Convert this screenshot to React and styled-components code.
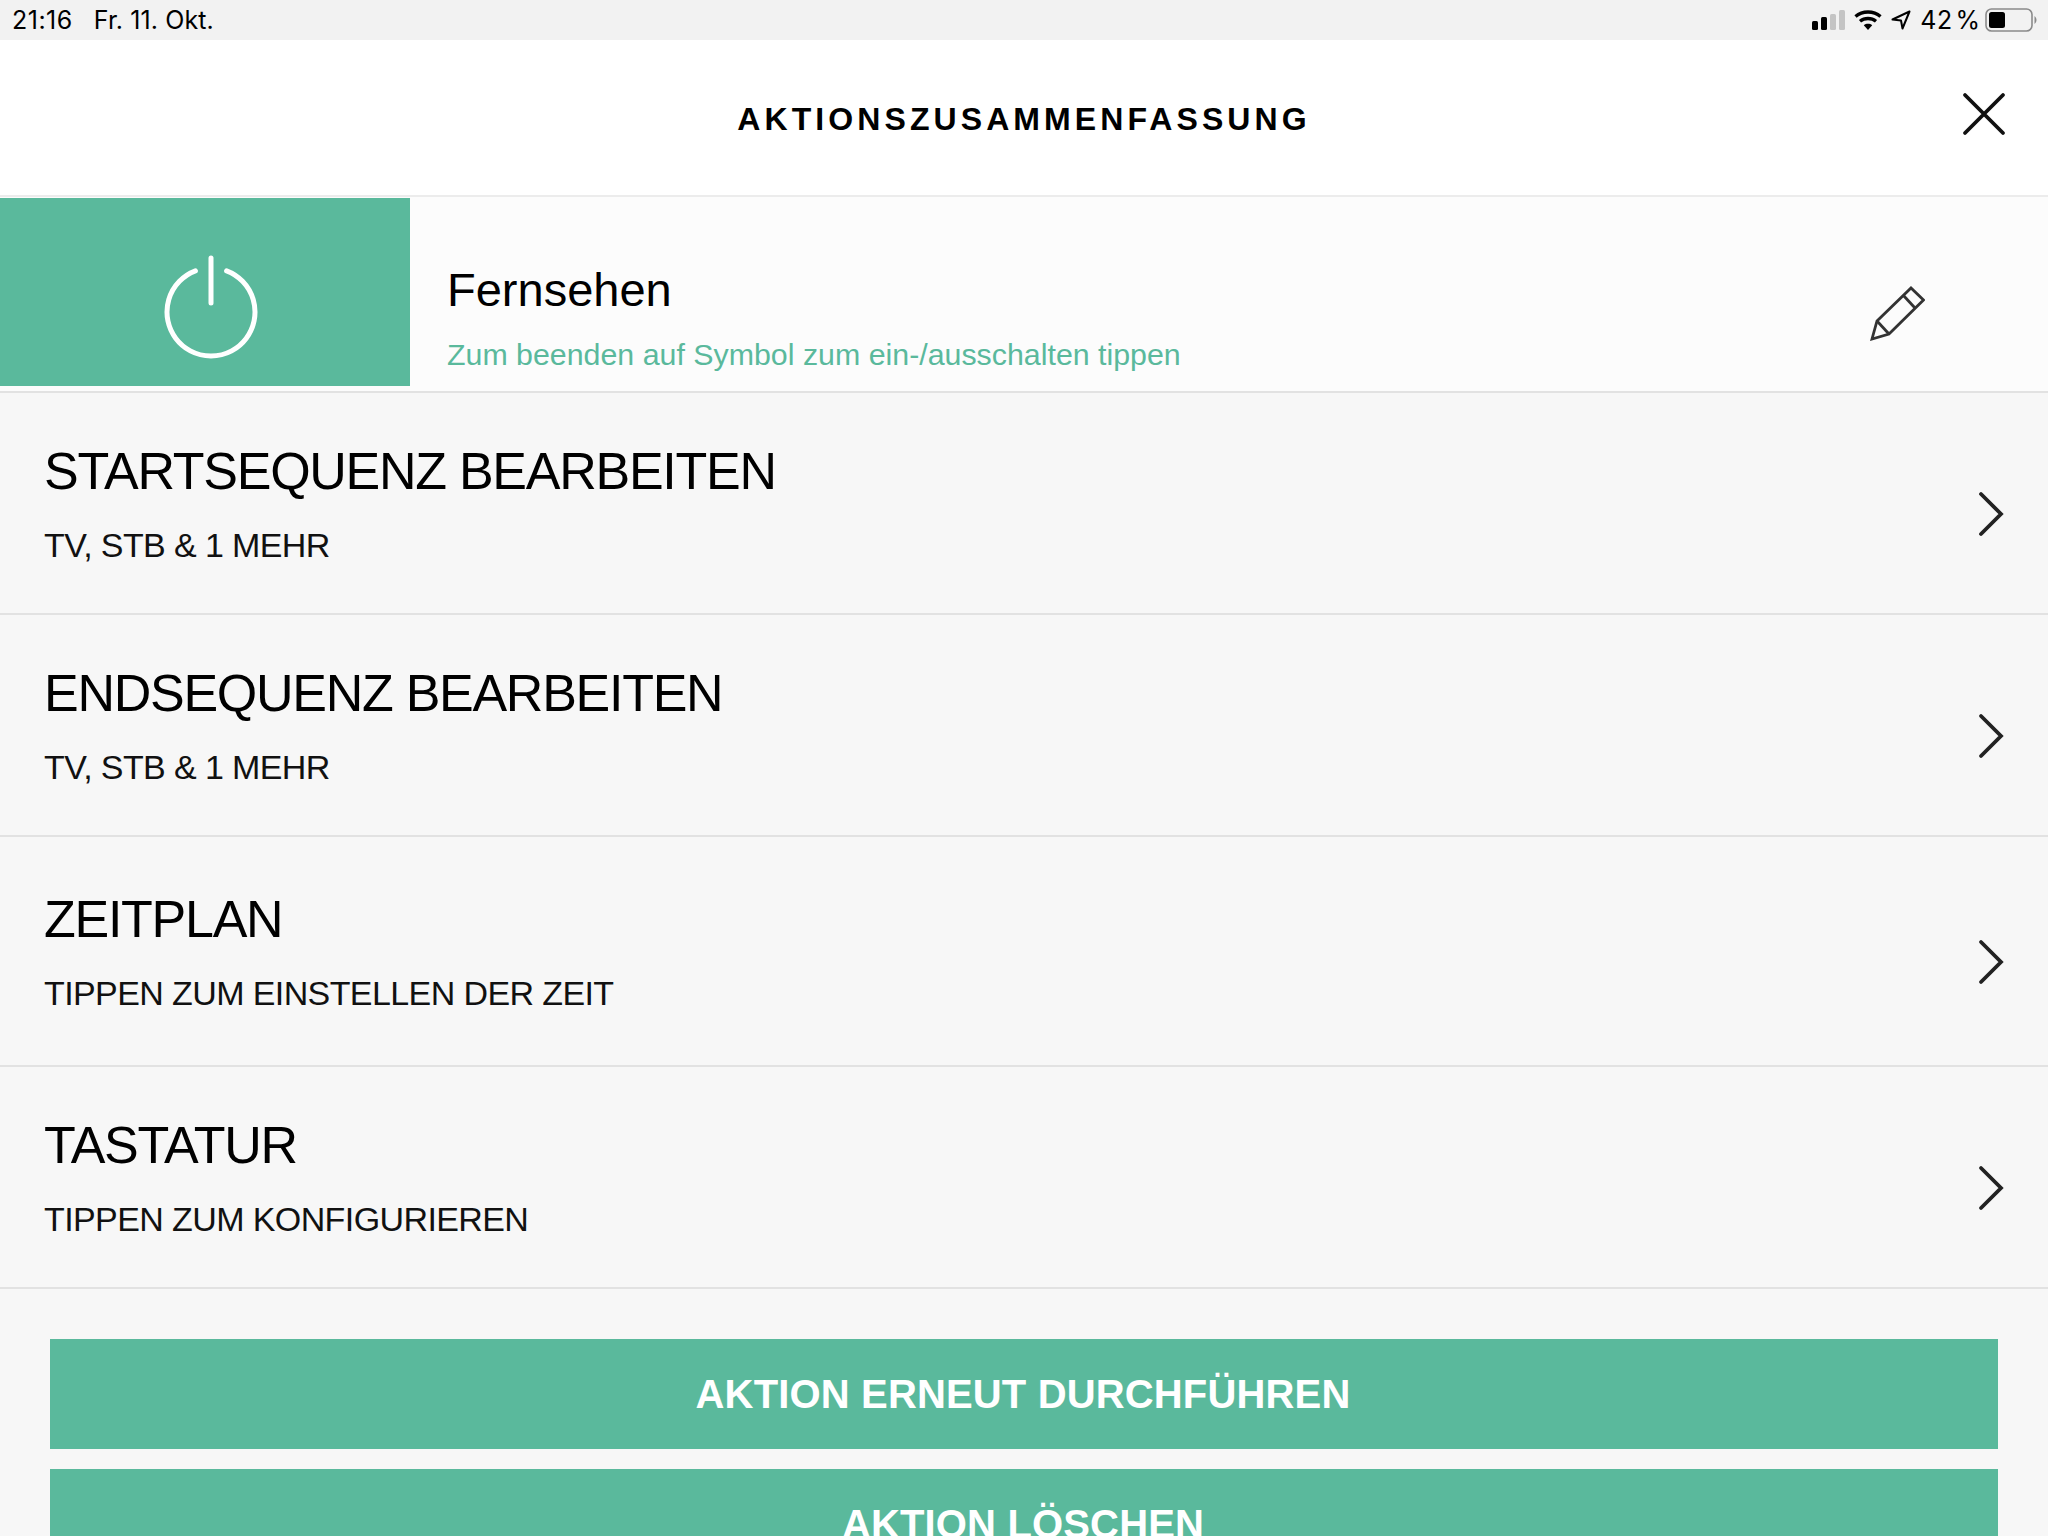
import React from 'react';
import styled, { createGlobalStyle } from 'styled-components';

const GREEN = '#5ab99c';

const GlobalStyle = createGlobalStyle`
  html, body {
    margin: 0;
    padding: 0;
    height: 1536px;
    overflow: hidden;
    background: #f7f7f7;
    font-family: "Liberation Sans", Arial, sans-serif;
  }
`;

const Page = styled.div`
  width: 2048px;
  height: 1536px;
  overflow: hidden;
  background: #f7f7f7;
`;

const StatusBar = styled.div`
  height: 40px;
  padding: 0 11px 0 12px;
  display: flex;
  align-items: center;
  justify-content: space-between;
  background: #f2f2f2;
  color: #000;
  font-family: Inter, sans-serif;
  font-size: 25px;
`;

const StatusGroup = styled.div`
  display: flex;
  align-items: center;
  gap: ${(p) => p.$gap}px;
`;

const Clock = styled.span`
  letter-spacing: 0.5px;
`;

const DateLabel = styled.span`
  letter-spacing: 0.1px;
`;

const BatteryLevel = styled.span`
  margin-right: -4px;
  word-spacing: -4px;
  font-variant-numeric: tabular-nums;
`;

const Header = styled.header`
  height: 155px;
  padding-top: 4px;
  box-sizing: border-box;
  display: flex;
  align-items: center;
  justify-content: center;
  position: relative;
  background: #fff;
`;

const HeaderRule = styled.div`
  height: 2px;
  background: #ececec;
`;

const Title = styled.h1`
  margin: 0;
  font-size: 32px;
  font-weight: 700;
  letter-spacing: 4.08px;
  color: #000;
`;

const CloseButton = styled.button`
  position: absolute;
  right: 41px;
  top: 51px;
  width: 46px;
  height: 46px;
  padding: 0;
  border: none;
  background: none;
`;

const Hero = styled.section`
  height: 193px;
  padding-top: 1px;
  box-sizing: content-box;
  display: flex;
  align-items: flex-start;
  background: #fcfcfc;
  border-bottom: 2px solid #e2e2e2;
`;

const PowerTile = styled.div`
  width: 410px;
  height: 188px;
  padding: 26px 0 0 12px;
  box-sizing: border-box;
  display: flex;
  align-items: center;
  justify-content: center;
  background: ${GREEN};
`;

const HeroText = styled.div`
  flex: 1;
  padding: 65px 0 0 37px;
`;

const HeroName = styled.div`
  font-size: 47px;
  line-height: 54px;
  color: #000;
`;

const HeroHint = styled.div`
  margin-top: 20px;
  font-size: 30.35px;
  line-height: 36px;
  color: ${GREEN};
`;

const EditIcon = styled.div`
  width: 55px;
  height: 55px;
  margin: 88px 123px 0 0;
`;

const Row = styled.div`
  height: ${(p) => p.$height}px;
  padding: 0 44px;
  display: flex;
  align-items: center;
  justify-content: space-between;
  background: #f7f7f7;
  border-bottom: 2px solid #e2e2e2;
`;

const RowName = styled.div`
  font-size: 52px;
  line-height: 60px;
  letter-spacing: -1.27px;
  color: #000;
`;

const RowDetail = styled.div`
  margin-top: 24px;
  font-size: 34px;
  line-height: 40px;
  letter-spacing: -0.6px;
  color: #111;
`;

const Chevron = styled.svg`
  width: 28px;
  height: 46px;
  margin: 21px -1px 0 0;
`;

const Actions = styled.div`
  padding: 50px 50px 0;
  display: flex;
  flex-direction: column;
  gap: 20px;
`;

const ActionButton = styled.button`
  height: 110px;
  flex: none;
  padding: 0 2px 0 0;
  border: none;
  background: ${GREEN};
  color: #fff;
  font-family: inherit;
  font-size: 40px;
  font-weight: 700;
  letter-spacing: 0.15px;
`;

const rows = [
  { name: 'STARTSEQUENZ BEARBEITEN', detail: 'TV, STB & 1 MEHR', height: 220 },
  { name: 'ENDSEQUENZ BEARBEITEN', detail: 'TV, STB & 1 MEHR', height: 220 },
  { name: 'ZEITPLAN', detail: 'TIPPEN ZUM EINSTELLEN DER ZEIT', height: 228 },
  { name: 'TASTATUR', detail: 'TIPPEN ZUM KONFIGURIEREN', height: 220 },
];

function SignalIcon() {
  return (
    <svg width="33" height="20" viewBox="0 0 33 20">
      <rect x="0" y="11" width="6" height="9" rx="1.5" fill="#000" />
      <rect x="9" y="7" width="6" height="13" rx="1.5" fill="#000" />
      <rect x="18" y="4" width="6" height="16" rx="1.5" fill="#c4c4c4" />
      <rect x="27" y="0" width="6" height="20" rx="1.5" fill="#c4c4c4" />
    </svg>
  );
}

function WifiIcon() {
  return (
    <svg width="28" height="20" viewBox="0 0 28 20" fill="none" stroke="#000" strokeWidth="3.4">
      <path d="M1.5 6.5C8.5 0.5 19.5 0.5 26.5 6.5" />
      <path d="M6 11.2C10.6 7.5 17.4 7.5 22 11.2" />
      <path d="M14 20L9.8 15.2C12.2 13.4 15.8 13.4 18.2 15.2Z" fill="#000" stroke="none" />
    </svg>
  );
}

function LocationIcon() {
  return (
    <svg width="20" height="20" viewBox="0 0 20 20" fill="none" stroke="#000" strokeWidth="2" strokeLinejoin="round">
      <path d="M18.5 1.5L1.5 9.5L10 10.5L11.5 18.5Z" />
    </svg>
  );
}

function BatteryIcon() {
  return (
    <svg width="52" height="24" viewBox="0 0 52 24">
      <rect x="1" y="1" width="46" height="22" rx="5.5" fill="none" stroke="#8a8a8a" strokeWidth="1.6" />
      <rect x="4" y="4" width="16" height="16" rx="2.5" fill="#000" />
      <path d="M49.5 8C51 9 51.5 11 51.5 12C51.5 13 51 15 49.5 16Z" fill="#8a8a8a" />
    </svg>
  );
}

function PowerIcon() {
  return (
    <svg width="100" height="110" viewBox="0 0 100 110" fill="none" stroke="#fff" strokeWidth="5" strokeLinecap="round">
      <path d="M50 8V53" />
      <path d="M34.4 20.9A44 44 0 1 0 65.6 20.9" />
    </svg>
  );
}

function PencilIcon() {
  return (
    <svg width="55" height="55" viewBox="0 0 55 55" fill="none" stroke="#333" strokeWidth="2.8">
      <path d="M2 53L7 35L41 2L53.5 14L19 48Z" />
      <path d="M7 35L19 48" />
      <path d="M33 9L45 22" />
    </svg>
  );
}

export default function App() {
  return (
    <Page>
      <GlobalStyle />
      <StatusBar>
        <StatusGroup $gap={21}>
          <Clock>21:16</Clock>
          <DateLabel>Fr. 11. Okt.</DateLabel>
        </StatusGroup>
        <StatusGroup $gap={9}>
          <SignalIcon />
          <WifiIcon />
          <LocationIcon />
          <BatteryLevel>42 %</BatteryLevel>
          <BatteryIcon />
        </StatusGroup>
      </StatusBar>
      <Header>
        <Title>AKTIONSZUSAMMENFASSUNG</Title>
        <CloseButton aria-label="Schließen">
          <svg width="46" height="46" viewBox="0 0 46 46" stroke="#111" strokeWidth="3.8" strokeLinecap="round">
            <path d="M4 4L42 42M42 4L4 42" />
          </svg>
        </CloseButton>
      </Header>
      <HeaderRule />
      <Hero>
        <PowerTile>
          <PowerIcon />
        </PowerTile>
        <HeroText>
          <HeroName>Fernsehen</HeroName>
          <HeroHint>Zum beenden auf Symbol zum ein-/ausschalten tippen</HeroHint>
        </HeroText>
        <EditIcon>
          <PencilIcon />
        </EditIcon>
      </Hero>
      {rows.map((row) => (
        <Row key={row.name} $height={row.height}>
          <div>
            <RowName>{row.name}</RowName>
            <RowDetail>{row.detail}</RowDetail>
          </div>
          <Chevron viewBox="0 0 28 46" fill="none" stroke="#222" strokeWidth="3.8" strokeLinecap="round">
            <path d="M4 3L24 23L4 43" />
          </Chevron>
        </Row>
      ))}
      <Actions>
        <ActionButton>AKTION ERNEUT DURCHFÜHREN</ActionButton>
        <ActionButton>AKTION LÖSCHEN</ActionButton>
      </Actions>
    </Page>
  );
}
